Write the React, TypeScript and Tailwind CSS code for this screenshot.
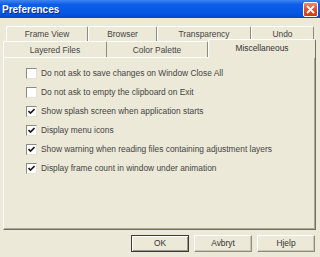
import React from "react";

const font = { fontFamily: '"Liberation Sans", Arial, sans-serif' };

const topTabs = [
  { label: "Frame View", w: "w-[82px]" },
  { label: "Browser", w: "w-[69px]" },
  { label: "Transparency", w: "w-[94px]" },
  { label: "Undo", w: "w-[63px]" },
];

const options = [
  { label: "Do not ask to save changes on Window Close All", checked: false },
  { label: "Do not ask to empty the clipboard on Exit", checked: false },
  { label: "Show splash screen when application starts", checked: true },
  { label: "Display menu icons", checked: true },
  { label: "Show warning when reading files containing adjustment layers", checked: true },
  { label: "Display frame count in window under animation", checked: true },
];

function Checkbox({ checked }: { checked: boolean }) {
  return (
    <div className="flex h-[11px] w-[11px] shrink-0 items-center justify-center border border-t-[#8d8b80] border-l-[#8d8b80] border-r-[#e4e2d6] border-b-[#e4e2d6] bg-white">
      {checked && (
        <svg width="7" height="7" viewBox="0 0 7 7">
          <path d="M0.5 3 L2.5 5 L6.5 1" stroke="#1c1c1c" strokeWidth="1.6" fill="none" />
        </svg>
      )}
    </div>
  );
}

function Button({ label, primary }: { label: string; primary?: boolean }) {
  return (
    <div
      className={
        "flex h-[17px] w-[58px] items-center justify-center text-[8.4px] text-[#333] " +
        (primary
          ? "border border-[#3b3a36] shadow-[inset_1px_1px_0_#fff,inset_-1px_-1px_0_#9a988c]"
          : "border border-t-white border-l-white border-r-[#8d8b80] border-b-[#8d8b80] shadow-[inset_-1px_-1px_0_#c9c6b6]")
      }
    >
      {label}
    </div>
  );
}

export default function App() {
  return (
    <div className="flex h-[257px] w-[320px] flex-col overflow-hidden bg-[#ece9d8]" style={font}>
      <div className="flex h-[18px] shrink-0 items-center justify-between bg-[linear-gradient(180deg,#3d86f5_0%,#0c5de8_25%,#0658e4_70%,#0447cf_100%)] pl-[2px] pr-[2px]">
        <span className="text-[10px] font-bold text-white [text-shadow:1px_1px_0_#0a2a7a]">Preferences</span>
        <div className="flex h-[15px] w-[15px] items-center justify-center rounded-[2px] border border-white bg-[linear-gradient(180deg,#ee8a6a_0%,#e2542c_45%,#cc3a12_100%)]">
          <svg width="9" height="9" viewBox="0 0 9 9">
            <path d="M1.5 1.5 L7.5 7.5 M7.5 1.5 L1.5 7.5" stroke="white" strokeWidth="1.8" strokeLinecap="round" />
          </svg>
        </div>
      </div>

      <div className="flex flex-col pt-[8px]">
        <div className="flex h-[15px] pl-[6px]">
          {topTabs.map((t) => (
            <div
              key={t.label}
              className={`${t.w} flex items-start justify-center rounded-t-[2px] border-t border-l border-r border-t-white border-l-white border-r-[#8d8b80] pt-[2px] text-[8.4px] leading-[10px] text-[#444]`}
            >
              {t.label}
            </div>
          ))}
        </div>
        <div className="flex h-[16px] items-end pl-[3px]">
          <div className="flex h-[16px] w-[104px] items-start justify-center rounded-t-[2px] border-t border-l border-r border-t-white border-l-white border-r-[#8d8b80] pt-[3px] text-[8.4px] leading-[10px] text-[#444]">
            Layered Files
          </div>
          <div className="flex h-[16px] w-[101px] items-start justify-center rounded-t-[2px] border-t border-r border-t-white border-r-[#8d8b80] pt-[3px] text-[8.4px] leading-[10px] text-[#444]">
            Color Palette
          </div>
          <div className="relative z-10 -mb-[1px] flex h-[19px] w-[108px] items-start justify-center rounded-t-[2px] border-t border-l border-r border-t-white border-l-white border-r-[#716f64] bg-[#ece9d8] pt-[3px] text-[8.4px] leading-[10px] text-[#333]">
            Miscellaneous
          </div>
        </div>
        <div className="ml-[3px] flex h-[173px] w-[313px] flex-col border border-t-white border-l-white border-r-[#716f64] border-b-[#716f64] pl-[22px] pt-[6px] shadow-[inset_-1px_-1px_0_#aca899]">
          {options.map((o) => (
            <div key={o.label} className="flex h-[19px] items-center gap-[4px] text-[8.4px] text-[#444]">
              <Checkbox checked={o.checked} />
              <span>{o.label}</span>
            </div>
          ))}
        </div>
      </div>

      <div className="flex justify-end gap-[5px] pr-[5px] pt-[5px]">
        <Button label="OK" primary />
        <Button label="Avbryt" />
        <Button label="Hjelp" />
      </div>
    </div>
  );
}
